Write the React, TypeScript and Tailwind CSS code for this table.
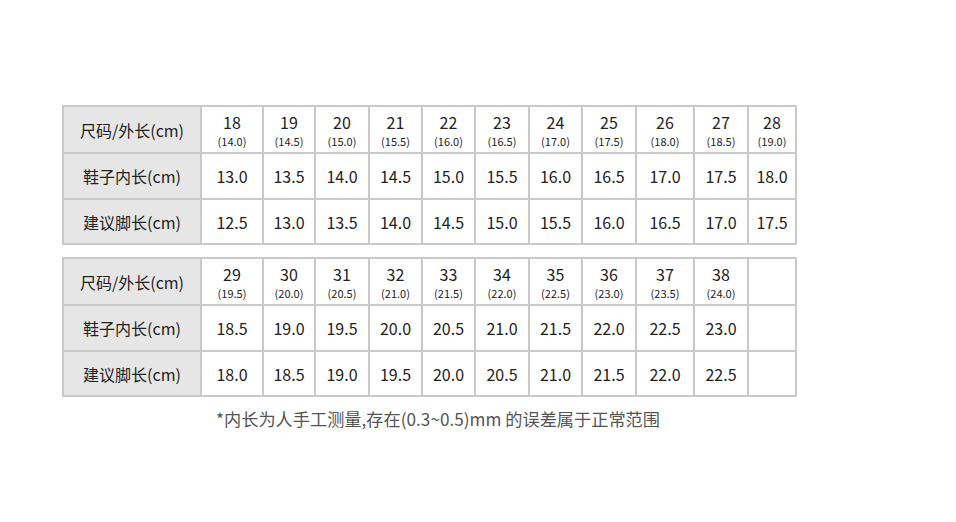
const font = { fontFamily: '"Noto Sans CJK SC", "Noto Sans", sans-serif' }

const COLS = 'grid-cols-[136px_60px_50px_52px_51px_51px_52px_51px_52px_56px_52px_46px]'

type Size = { size: string; outer: string }

interface TableData {
  sizes: Size[]
  inner: string[]
  foot: string[]
}

const table1: TableData = {
  sizes: [
    { size: '18', outer: '14.0' },
    { size: '19', outer: '14.5' },
    { size: '20', outer: '15.0' },
    { size: '21', outer: '15.5' },
    { size: '22', outer: '16.0' },
    { size: '23', outer: '16.5' },
    { size: '24', outer: '17.0' },
    { size: '25', outer: '17.5' },
    { size: '26', outer: '18.0' },
    { size: '27', outer: '18.5' },
    { size: '28', outer: '19.0' },
  ],
  inner: ['13.0', '13.5', '14.0', '14.5', '15.0', '15.5', '16.0', '16.5', '17.0', '17.5', '18.0'],
  foot: ['12.5', '13.0', '13.5', '14.0', '14.5', '15.0', '15.5', '16.0', '16.5', '17.0', '17.5'],
}

const table2: TableData = {
  sizes: [
    { size: '29', outer: '19.5' },
    { size: '30', outer: '20.0' },
    { size: '31', outer: '20.5' },
    { size: '32', outer: '21.0' },
    { size: '33', outer: '21.5' },
    { size: '34', outer: '22.0' },
    { size: '35', outer: '22.5' },
    { size: '36', outer: '23.0' },
    { size: '37', outer: '23.5' },
    { size: '38', outer: '24.0' },
    { size: '', outer: '' },
  ],
  inner: ['18.5', '19.0', '19.5', '20.0', '20.5', '21.0', '21.5', '22.0', '22.5', '23.0', ''],
  foot: ['18.0', '18.5', '19.0', '19.5', '20.0', '20.5', '21.0', '21.5', '22.0', '22.5', ''],
}

function Label({ children, h }: { children: React.ReactNode; h: string }) {
  return (
    <div className={`flex ${h} items-center justify-center bg-[#e6e6e6] text-[16px] text-[#222]`}>
      {children}
    </div>
  )
}

function SizeTable({ data }: { data: TableData }) {
  return (
    <div className={`grid ${COLS} w-max gap-[2px] bg-[#c9c9c9] p-[2px]`}>
      <Label h="h-[45px]">尺码/外长(cm)</Label>
      {data.sizes.map((s, i) => (
        <div key={i} className="flex h-[45px] flex-col items-center justify-center bg-white pt-[2px] text-[#222]">
          {s.size && (
            <>
              <span className="text-[16px] leading-[18px]">{s.size}</span>
              <span className="mt-[3px] text-[11px] leading-[14px]">({s.outer})</span>
            </>
          )}
        </div>
      ))}
      <Label h="h-[44px]">鞋子内长(cm)</Label>
      {data.inner.map((v, i) => (
        <div key={i} className="flex h-[44px] items-center justify-center bg-white text-[16px] text-[#222]">
          {v}
        </div>
      ))}
      <Label h="h-[43px]">建议脚长(cm)</Label>
      {data.foot.map((v, i) => (
        <div key={i} className="flex h-[43px] items-center justify-center bg-white text-[16px] text-[#222]">
          {v}
        </div>
      ))}
    </div>
  )
}

export default function App() {
  return (
    <div className="h-[522px] w-[956px] bg-white pl-[62px] pt-[105px]" style={font}>
      <div className="flex w-max flex-col gap-[12px]">
        <SizeTable data={table1} />
        <SizeTable data={table2} />
      </div>
      <p className="mt-[10px] w-[752px] text-center text-[17.2px] leading-[24px] text-[#555]">
        *内长为人手工测量,存在(0.3~0.5)mm 的误差属于正常范围
      </p>
    </div>
  )
}
